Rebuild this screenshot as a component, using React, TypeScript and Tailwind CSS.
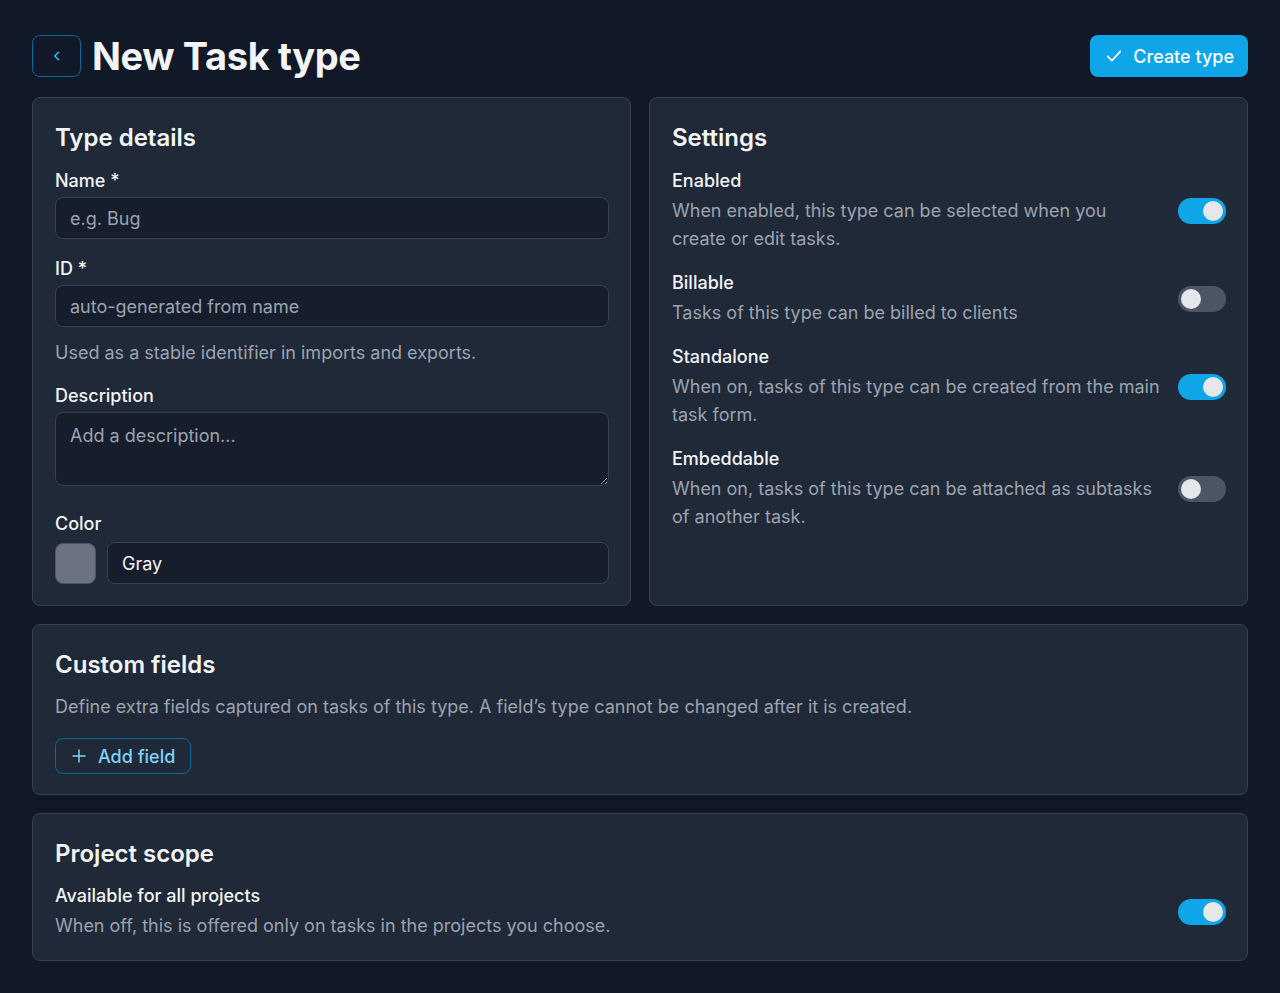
import { useState } from "react"

function Toggle({ on }: { on: boolean }) {
  const [value, setValue] = useState(on)
  return (
    <button
      type="button"
      onClick={() => setValue(!value)}
      className={`relative shrink-0 w-[48px] h-[26px] rounded-full transition ${
        value ? "bg-[#0ea5e9]" : "bg-[#4b5563]"
      }`}
    >
      <span
        className={`absolute top-[3px] w-[20px] h-[20px] rounded-full bg-[#e5e7eb] transition-all ${
          value ? "left-[25px]" : "left-[3px]"
        }`}
      />
    </button>
  )
}

function SettingRow({ title, desc, on }: { title: string; desc: string; on: boolean }) {
  return (
    <div className="flex items-center gap-4">
      <div className="flex-1">
        <div className="text-[18px] leading-[26px] font-medium text-[#f3f4f6]">{title}</div>
        <div className="mt-[3px] text-[18px] leading-[28px] text-[#9ca3af]">{desc}</div>
      </div>
      <Toggle on={on} />
    </div>
  )
}

const inputCls =
  "w-full h-[42px] rounded-lg bg-[#161e2c] border border-[#374151] px-[14px] text-[18px] text-[#f3f4f6] placeholder:text-[#9ca3af] outline-none focus:border-[#0ea5e9]"

export default function App() {
  return (
    <div className="min-h-screen bg-[#111827] text-[#f3f4f6] font-['Inter',sans-serif] px-8 pt-[35px] pb-8">

      {/* header */}
      <div className="flex items-center justify-between h-[42px]">
        <div className="flex items-center gap-[11px]">
          <button className="w-[49px] h-[42px] rounded-lg border border-[#0369a1] flex items-center justify-center text-[#38bdf8]">
            <svg width="18" height="18" viewBox="0 0 24 24" fill="none" stroke="currentColor" strokeWidth="2" strokeLinecap="round" strokeLinejoin="round">
              <path d="M14 7l-5 5 5 5" />
            </svg>
          </button>
          <h1 className="text-[38px] leading-[42px] font-bold tracking-[-0.01em] text-[#f3f4f6]">New Task type</h1>
        </div>
        <button className="h-[42px] px-[14px] rounded-lg bg-[#0ea5e9] flex items-center gap-[9px] text-white text-[18px] font-medium">
          <svg width="20" height="20" viewBox="0 0 24 24" fill="none" stroke="currentColor" strokeWidth="2" strokeLinecap="round" strokeLinejoin="round">
            <path d="M4.5 12.5l5 5 10-11" />
          </svg>
          Create type
        </button>
      </div>

      {/* top cards */}
      <div className="mt-5 grid grid-cols-2 gap-[18px]">
        <div className="rounded-lg bg-[#1f2937] border border-[#374151] pl-[22px] pr-[21px] pt-[24px] pb-[21px]">
          <h2 className="text-[24px] leading-[32px] font-semibold">Type details</h2>

          <label className="block mt-[14px] text-[18px] leading-[26px] font-medium">Name *</label>
          <input className={`${inputCls} mt-[3px]`} placeholder="e.g. Bug" />

          <label className="block mt-[17px] text-[18px] leading-[26px] font-medium">ID *</label>
          <input className={`${inputCls} mt-[3px]`} placeholder="auto-generated from name" />
          <p className="mt-[12px] text-[18px] leading-[28px] text-[#9ca3af]">Used as a stable identifier in imports and exports.</p>

          <label className="block mt-[16px] text-[18px] leading-[26px] font-medium">Description</label>
          <textarea
            className="block mt-[3px] w-full h-[74px] rounded-lg bg-[#161e2c] border border-[#374151] px-[14px] py-[10px] text-[18px] leading-[26px] text-[#f3f4f6] placeholder:text-[#9ca3af] outline-none resize-y"
            placeholder="Add a description..."
          />

          <label className="block mt-[25px] text-[18px] leading-[26px] font-medium">Color</label>
          <div className="mt-[5px] flex items-center gap-[11px]">
            <div className="w-[41px] h-[41px] shrink-0 rounded-lg bg-[#6b7280] border border-[#4b5563]" />
            <input className={inputCls} defaultValue="Gray" />
          </div>
        </div>

        <div className="rounded-lg bg-[#1f2937] border border-[#374151] pl-[22px] pr-[21px] pt-[24px] pb-[21px]">
          <h2 className="text-[24px] leading-[32px] font-semibold">Settings</h2>
          <div className="mt-[14px] flex flex-col gap-[17px]">
            <SettingRow title="Enabled" desc="When enabled, this type can be selected when you create or edit tasks." on={true} />
            <SettingRow title="Billable" desc="Tasks of this type can be billed to clients" on={false} />
            <SettingRow title="Standalone" desc="When on, tasks of this type can be created from the main task form." on={true} />
            <SettingRow title="Embeddable" desc="When on, tasks of this type can be attached as subtasks of another task." on={false} />
          </div>
        </div>
      </div>

      {/* custom fields */}
      <div className="mt-[18px] rounded-lg bg-[#1f2937] border border-[#374151] pl-[22px] pr-[21px] pt-[24px] pb-[20px]">
        <h2 className="text-[24px] leading-[32px] font-semibold">Custom fields</h2>
        <p className="mt-[12px] text-[18px] leading-[28px] text-[#9ca3af]">
          Define extra fields captured on tasks of this type. A field’s type cannot be changed after it is created.
        </p>
        <button className="mt-[17px] h-[36px] pl-[14px] pr-[15px] rounded-lg border border-[#0369a1] flex items-center gap-[10px] text-[#7dd3fc] text-[18px] font-medium">
          <svg width="18" height="18" viewBox="0 0 24 24" fill="none" stroke="currentColor" strokeWidth="2" strokeLinecap="round">
            <path d="M12 4v16M4 12h16" />
          </svg>
          Add field
        </button>
      </div>

      {/* project scope */}
      <div className="mt-[18px] rounded-lg bg-[#1f2937] border border-[#374151] pl-[22px] pr-[21px] pt-[24px] pb-[20px]">
        <h2 className="text-[24px] leading-[32px] font-semibold">Project scope</h2>
        <div className="mt-[13px]">
          <SettingRow title="Available for all projects" desc="When off, this is offered only on tasks in the projects you choose." on={true} />
        </div>
      </div>
    </div>
  )
}
